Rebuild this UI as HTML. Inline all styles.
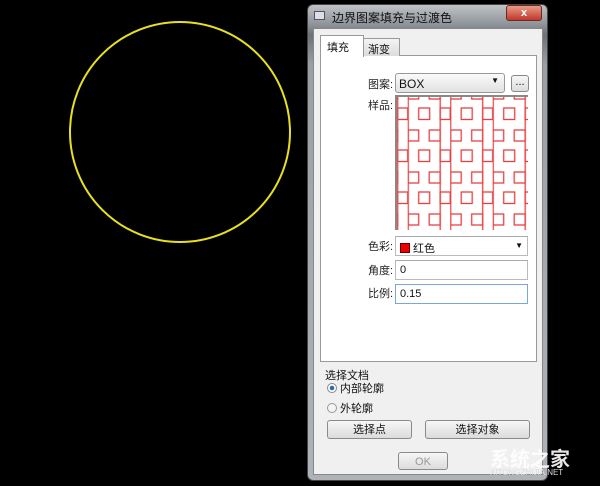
<!DOCTYPE html>
<html><head><meta charset="utf-8"><style>
*{margin:0;padding:0;box-sizing:border-box}
body{width:600px;height:486px;background:#000;position:relative;overflow:hidden;font-family:"Liberation Sans","Noto Sans CJK SC",sans-serif;font-size:11px;color:#111}
.a{position:absolute}
.win{left:307px;top:4px;width:241px;height:477px;border-radius:6px;background:linear-gradient(#bfc3c7,#8d9298 20px,#6c7177 30px,#9aa0a6 60px,#aeb3b8);border:1px solid #444}
.client{left:313px;top:28px;width:230px;height:447px;background:#f0f0f0;border:1px solid #888}
.panel{left:320px;top:55px;width:217px;height:307px;background:#fff;border:1px solid #999}
.lbl{font-size:11px;color:#222}
.field{background:#fff;border:1px solid #bbb;border-top-color:#aaa;height:20px;padding:3px 4px}
.btn{background:linear-gradient(#f6f6f6,#dcdcdc);border:1px solid #8a8a8a;border-radius:3px;text-align:center;font-size:11px;line-height:18px}
</style></head><body>
<svg class="a" style="left:0;top:0" width="300" height="300"><circle cx="180" cy="132" r="110" fill="none" stroke="#e8e020" stroke-width="2"/></svg>
<div class="a win"></div>
<div class="a" style="left:314px;top:11px;width:11px;height:9px;background:#dde;border:1px solid #555"></div>
<div class="a" style="left:332px;top:9px;color:#111;font-size:12px">边界图案填充与过渡色</div>
<div class="a" style="left:506px;top:5px;width:36px;height:16px;border-radius:3px;background:linear-gradient(#e89a88,#c0392b);border:1px solid #6b2a20;color:#fff;text-align:center;font-weight:bold;line-height:14px">x</div>
<div class="a client"></div>
<div class="a panel"></div>
<div class="a" style="left:363px;top:38px;width:37px;height:18px;background:linear-gradient(#f4f4f4,#dcdcdc);border:1px solid #999;border-bottom:none;padding:2px 4px">渐变</div>
<div class="a" style="left:320px;top:35px;width:44px;height:22px;background:#fff;border:1px solid #999;border-bottom:none;padding:3px 6px">填充</div>
<div class="a lbl" style="left:368px;top:76px">图案:</div>
<div class="a" style="left:395px;top:73px;width:110px;height:20px;border:1px solid #999;border-radius:3px;background:linear-gradient(#fafafa,#e2e2e2);padding:3px 3px;font-size:12px">BOX<span style="position:absolute;right:5px;top:2px;font-size:8px">▼</span></div>
<div class="a btn" style="left:511px;top:75px;width:18px;height:17px;line-height:13px">...</div>
<div class="a lbl" style="left:368px;top:97px">样品:</div>
<svg class="a" style="left:395px;top:95px" width="133" height="135">
<defs><pattern id="p" x="12.7" y="0" width="42.5" height="42" patternUnits="userSpaceOnUse">
<g fill="none" stroke="#e84040" stroke-width="1.3">
<line x1="0.5" y1="0" x2="0.5" y2="42"/><line x1="32.5" y1="0" x2="32.5" y2="42"/>
<rect x="11" y="13" width="11" height="11.5"/><rect x="32.5" y="13" width="10" height="11.5"/>
<rect x="0.5" y="35" width="10.5" height="11"/><rect x="21.5" y="35" width="11" height="11"/>
<rect x="0.5" y="-7" width="10.5" height="11"/><rect x="21.5" y="-7" width="11" height="11"/>
</g></pattern></defs>
<rect width="133" height="135" fill="#fff"/><rect width="133" height="135" fill="url(#p)"/>
<line x1="1" y1="0" x2="1" y2="135" stroke="#888" stroke-width="2"/><line x1="0" y1="1" x2="133" y2="1" stroke="#888" stroke-width="2"/>
</svg>
<div class="a lbl" style="left:368px;top:238px">色彩:</div>
<div class="a field" style="left:395px;top:236px;width:133px"><span style="display:inline-block;width:10px;height:10px;background:#e00;border:1px solid #600;vertical-align:-1px"></span> 红色<span style="position:absolute;right:4px;top:4px;font-size:8px">▼</span></div>
<div class="a lbl" style="left:368px;top:262px">角度:</div>
<div class="a field" style="left:395px;top:260px;width:133px">0</div>
<div class="a lbl" style="left:368px;top:285px">比例:</div>
<div class="a field" style="left:395px;top:284px;width:133px;border-color:#7aa7d8">0.15</div>
<div class="a" style="left:325px;top:367px">选择文档</div>
<div class="a" style="left:327px;top:380px"><span style="display:inline-block;width:10px;height:10px;border-radius:50%;border:1px solid #888;background:radial-gradient(#2a6bb0 35%,#fff 45%);vertical-align:-1px"></span> 内部轮廓</div>
<div class="a" style="left:327px;top:400px"><span style="display:inline-block;width:10px;height:10px;border-radius:50%;border:1px solid #999;background:#f4f4f4;vertical-align:-1px"></span> 外轮廓</div>
<div class="a btn" style="left:327px;top:420px;width:85px;height:19px">选择点</div>
<div class="a btn" style="left:425px;top:420px;width:105px;height:19px">选择对象</div>
<div class="a btn" style="left:398px;top:452px;width:50px;height:18px;color:#999">OK</div>
<div class="a" style="left:490px;top:443px;color:#fff;font-size:20px;font-weight:bold;opacity:.9">系统之家</div>
<div class="a" style="left:490px;top:468px;color:#ddd;font-size:8px">XITONGZHIJIA.NET</div>
</body></html>
